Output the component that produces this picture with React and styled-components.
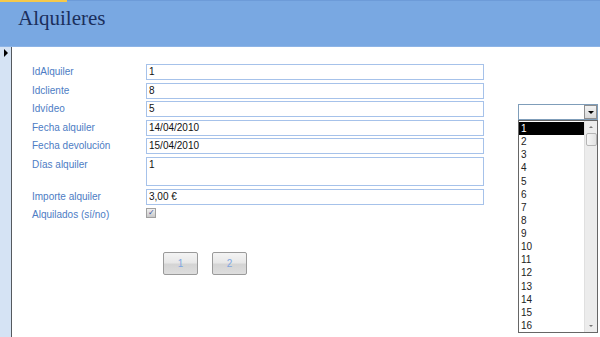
import React from 'react';
import styled, { createGlobalStyle } from 'styled-components';

const GlobalStyle = createGlobalStyle`
  html, body {
    margin: 0;
    padding: 0;
    background: #fff;
    overflow: hidden;
  }
  body {
    font-family: 'Liberation Sans', Arial, sans-serif;
  }
`;

const Screen = styled.div`
  display: flex;
  flex-direction: column;
  width: 600px;
  height: 337px;
  overflow: hidden;
`;

const Header = styled.header`
  position: relative;
  height: 45px;
  background: #79a8e2;
  border-top: 1px solid #6d9bd8;
  border-bottom: 1px solid #8db4e6;
  display: flex;
  align-items: flex-start;
  padding-left: 18px;
`;

const Tab = styled.span`
  position: absolute;
  left: 0;
  top: -1px;
  width: 67px;
  height: 2px;
  background: #f6c94a;
`;

const Title = styled.h1`
  margin: 5px 0 0;
  font-family: 'Liberation Serif', 'Times New Roman', serif;
  font-weight: normal;
  font-size: 21px;
  color: #1b2f5c;
`;

const Body = styled.div`
  flex: 1;
  display: flex;
  position: relative;
`;

const Selector = styled.div`
  width: 11px;
  background: #d5e3f4;
  border-right: 1px solid #55595f;
  display: flex;
  justify-content: center;
  padding-top: 2px;
`;

const Arrow = styled.span`
  width: 0;
  height: 0;
  margin-left: 1px;
  border-top: 4px solid transparent;
  border-bottom: 4px solid transparent;
  border-left: 4px solid #000;
`;

const Form = styled.div`
  display: grid;
  grid-template-columns: 114px 338px;
  row-gap: 2.6px;
  padding: 17px 0 0 20px;
  align-content: start;
`;

const Label = styled.label`
  font-size: 10px;
  line-height: 16px;
  color: #4d7cc4;
  white-space: nowrap;
`;

const Field = styled.div`
  box-sizing: border-box;
  height: ${p => p.$tall ? 29 : 16}px;
  border: 1px solid #a6c2ea;
  padding: 1px 2px;
  font-size: 10px;
  line-height: 12px;
  color: #111;
`;

const CheckCell = styled.div`
  padding-top: 1px;
`;

const Check = styled.span`
  display: flex;
  align-items: center;
  justify-content: center;
  box-sizing: border-box;
  width: 10px;
  height: 10px;
  border: 1px solid #a0a0a0;
  background: linear-gradient(#f0f0f0, #c9c9c9);
  color: #3b4f9a;
  font-size: 8px;
  line-height: 8px;
`;

const Buttons = styled.div`
  grid-column: 1 / -1;
  display: flex;
  gap: 14px;
  padding: 26px 0 0 131px;
`;

const NavButton = styled.button`
  box-sizing: border-box;
  width: 35px;
  height: 23px;
  border: 1px solid #9a9a9a;
  border-radius: 2px;
  background: linear-gradient(#f4f4f4 0%, #e8e8e8 45%, #d4d4d4 55%, #dedede 100%);
  color: #7fa6e0;
  font-family: 'Liberation Sans', Arial, sans-serif;
  font-size: 10px;
  padding: 0;
`;

const Combo = styled.div`
  position: absolute;
  left: 518px;
  top: 57px;
  width: 80px;
`;

const ComboBox = styled.div`
  box-sizing: border-box;
  height: 16px;
  border: 1px solid #7f9db9;
  background: #fff;
  display: flex;
  justify-content: flex-end;
`;

const DropButton = styled.span`
  box-sizing: border-box;
  width: 13px;
  height: 14px;
  border: 1px solid #8f8f8f;
  background: linear-gradient(#f2f2f2, #d8d8d8);
  display: flex;
  align-items: center;
  justify-content: center;
  &::after {
    content: '';
    border-left: 3px solid transparent;
    border-right: 3px solid transparent;
    border-top: 3px solid #000;
  }
`;

const List = styled.div`
  box-sizing: border-box;
  height: 213px;
  border: 1px solid #666;
  background: #fff;
  display: flex;
`;

const Items = styled.div`
  flex: 1;
  display: flex;
  flex-direction: column;
  padding-top: 1px;
`;

const Item = styled.div`
  height: 13.27px;
  line-height: 13px;
  font-size: 10px;
  padding-left: 2px;
  color: ${p => p.$selected ? '#fff' : '#222'};
  background: ${p => p.$selected ? '#000' : 'transparent'};
`;

const Scroll = styled.div`
  width: 12px;
  background: #ececec;
  border-left: 1px solid #e0e0e0;
  display: flex;
  flex-direction: column;
  align-items: center;
`;

const ScrollArrow = styled.span`
  height: 12px;
  display: flex;
  align-items: center;
  &::after {
    content: '';
    border-left: 2px solid transparent;
    border-right: 2px solid transparent;
    ${p => p.$down ? 'border-top: 2px solid #777;' : 'border-bottom: 2px solid #777;'}
  }
`;

const Thumb = styled.span`
  box-sizing: border-box;
  width: 11px;
  height: 13px;
  border: 1px solid #b5b5b5;
  border-radius: 2px;
  background: linear-gradient(90deg, #f6f6f6, #e2e2e2);
`;

const Track = styled.span`
  flex: 1;
`;

const fields = [
  ['IdAlquiler', '1'],
  ['Idcliente', '8'],
  ['Idvídeo', '5'],
  ['Fecha alquiler', '14/04/2010'],
  ['Fecha devolución', '15/04/2010'],
  ['Días alquiler', '1', true],
  ['Importe alquiler', '3,00 €'],
];

const options = Array.from({ length: 16 }, (_, i) => i + 1);

const App = () => {
  return (
    <Screen>
      <GlobalStyle />
      <Header>
        <Tab />
        <Title>Alquileres</Title>
      </Header>
      <Body>
        <Selector>
          <Arrow />
        </Selector>
        <Form>
          {fields.map(([label, value, tall]) => (
            <React.Fragment key={label}>
              <Label>{label}</Label>
              <Field $tall={tall}>{value}</Field>
            </React.Fragment>
          ))}
          <Label>Alquilados (sí/no)</Label>
          <CheckCell>
            <Check>✓</Check>
          </CheckCell>
          <Buttons>
            <NavButton>1</NavButton>
            <NavButton>2</NavButton>
          </Buttons>
        </Form>
        <Combo>
          <ComboBox>
            <DropButton />
          </ComboBox>
          <List>
            <Items>
              {options.map(n => (
                <Item key={n} $selected={n === 1}>{n}</Item>
              ))}
            </Items>
            <Scroll>
              <ScrollArrow />
              <Thumb />
              <Track />
              <ScrollArrow $down />
            </Scroll>
          </List>
        </Combo>
      </Body>
    </Screen>
  );
};

export default App;
